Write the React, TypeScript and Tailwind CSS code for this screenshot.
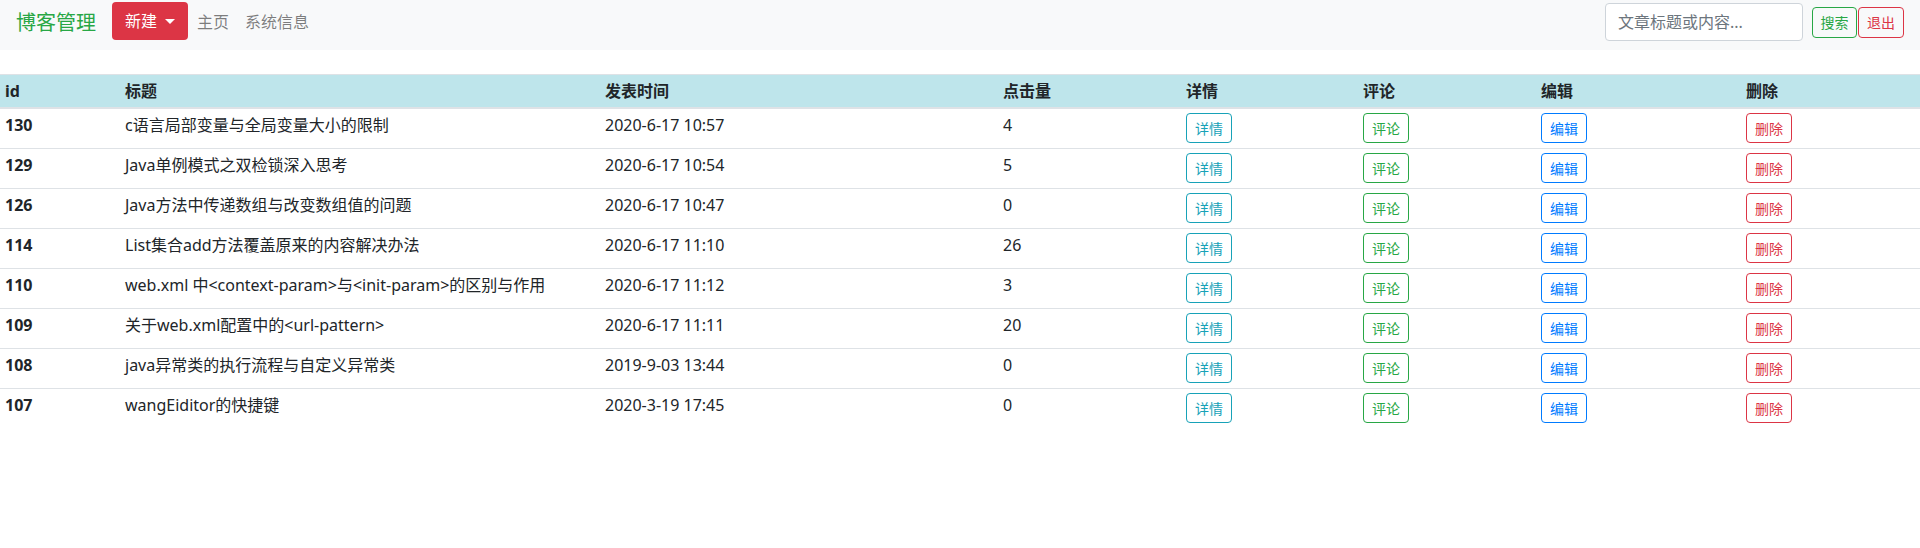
import { useState } from "react";

type Blog = {
  id: number;
  title: string;
  time: string;
  hits: number;
};

const blogs: Blog[] = [
  { id: 130, title: "c语言局部变量与全局变量大小的限制", time: "2020-6-17 10:57", hits: 4 },
  { id: 129, title: "Java单例模式之双检锁深入思考", time: "2020-6-17 10:54", hits: 5 },
  { id: 126, title: "Java方法中传递数组与改变数组值的问题", time: "2020-6-17 10:47", hits: 0 },
  { id: 114, title: "List集合add方法覆盖原来的内容解决办法", time: "2020-6-17 11:10", hits: 26 },
  { id: 110, title: "web.xml 中<context-param>与<init-param>的区别与作用", time: "2020-6-17 11:12", hits: 3 },
  { id: 109, title: "关于web.xml配置中的<url-pattern>", time: "2020-6-17 11:11", hits: 20 },
  { id: 108, title: "java异常类的执行流程与自定义异常类", time: "2019-9-03 13:44", hits: 0 },
  { id: 107, title: "wangEiditor的快捷键", time: "2020-3-19 17:45", hits: 0 },
];

const actions = [
  { label: "详情", className: "border-[#17a2b8] text-[#17a2b8]" },
  { label: "评论", className: "border-[#28a745] text-[#28a745]" },
  { label: "编辑", className: "border-[#007bff] text-[#007bff]" },
  { label: "删除", className: "border-[#dc3545] text-[#dc3545]" },
];

const headers = ["id", "标题", "发表时间", "点击量", "详情", "评论", "编辑", "删除"];

const Navbar = () => {
  const [keyword, setKeyword] = useState("");

  return (
    <nav className="h-[50px] bg-[#f8f9fa] flex items-start">
      <a className="ml-4 mt-2 text-[20px] leading-[30px] text-[#28a745]">博客管理</a>
      <button className="ml-4 mt-[2px] h-[38px] px-[13px] flex items-center gap-2 rounded bg-[#dc3545] text-white text-base leading-6">
        新建
        <span className="w-0 h-0 border-x-[5px] border-x-transparent border-t-[5px] border-t-white" />
      </button>
      <a className="ml-px mt-[10px] px-2 text-base leading-6 text-black/50">主页</a>
      <a className="mt-[10px] px-2 text-base leading-6 text-black/50">系统信息</a>

      <div className="flex-1" />

      <input
        type="text"
        value={keyword}
        onChange={(e) => setKeyword(e.target.value)}
        placeholder="文章标题或内容..."
        className="mt-[3px] h-[38px] w-[198px] px-3 rounded border border-[#ced4da] bg-white text-base text-[#495057] outline-none placeholder:text-[#6c757d]"
      />
      <button className="ml-[9px] mt-[7px] h-[31px] w-[45px] rounded border border-[#28a745] text-sm text-[#28a745]">
        搜索
      </button>
      <button className="ml-px mr-4 mt-[7px] h-[31px] w-[46px] rounded border border-[#dc3545] text-sm text-[#dc3545]">
        退出
      </button>
    </nav>
  );
};

export default function App() {
  return (
    <div className="min-h-[548px] bg-white text-[#212529] font-['Noto_Sans','Noto_Sans_CJK_SC',sans-serif]">
      <Navbar />

      <table className="mt-6 w-full table-fixed border-separate border-spacing-0 text-base leading-6">
        <colgroup>
          <col className="w-[120px]" />
          <col className="w-[480px]" />
          <col className="w-[398px]" />
          <col className="w-[183px]" />
          <col className="w-[177px]" />
          <col className="w-[178px]" />
          <col className="w-[205px]" />
          <col className="w-[179px]" />
        </colgroup>
        <thead>
          <tr className="bg-[#bee5eb]">
            {headers.map((h) => (
              <th
                key={h}
                className="px-[5px] py-1 text-left font-bold border-t border-b-2 border-[#dee2e6]"
              >
                {h}
              </th>
            ))}
          </tr>
        </thead>
        <tbody>
          {blogs.map((blog, i) => {
            const cell = `px-[5px] pt-1 pb-[5px] align-top border-[#dee2e6] ${i === 0 ? "" : "border-t"}`;
            return (
              <tr key={blog.id}>
                <td className={`${cell} font-bold`}>{blog.id}</td>
                <td className={cell}>{blog.title}</td>
                <td className={cell}>{blog.time}</td>
                <td className={cell}>{blog.hits}</td>
                {actions.map((a) => (
                  <td key={a.label} className={cell}>
                    <button
                      className={`h-[30px] w-[46px] rounded border text-sm leading-[21px] ${a.className}`}
                    >
                      {a.label}
                    </button>
                  </td>
                ))}
              </tr>
            );
          })}
        </tbody>
      </table>
    </div>
  );
}
